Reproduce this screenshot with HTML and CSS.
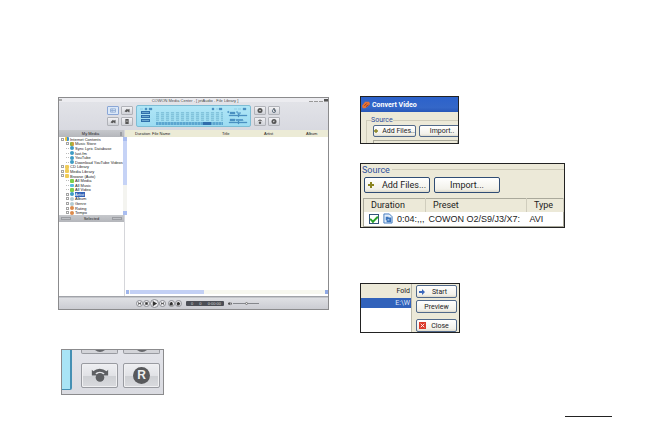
FILE: index.html
```html
<!DOCTYPE html>
<html lang="en">
<head>
  <meta charset="UTF-8" />
  <meta name="viewport" content="width=device-width, initial-scale=1.0" />
  <title>Convert Video</title>
  <link rel="stylesheet" href="styles.css">
</head>
<body>
  <main class="page">
    <div class="column left-column">
      <section class="player">
        <header class="player-title">
          <span class="title-mark"></span>
          <span class="title-text">COWON Media Center - [ jetAudio - File Library ]</span>
          <span class="window-icons"><i></i><i></i><i></i><i class="dark"></i></span>
        </header>

        <div class="player-top">
          <div class="pad pad-left">
            <button class="tool active" aria-label="Library"><svg viewBox="0 0 12 8"><path class="line" d="M3 2h6v4H3zM3 4h6M5 2v4" /></svg></button>
            <button class="tool" aria-label="Rip"><svg viewBox="0 0 12 8"><path d="M3 5l3-3 1 1 2-1v4H8L7 5 5 6z" /></svg></button>
            <button class="tool" aria-label="Burn"><svg viewBox="0 0 12 8"><path d="M3 5l3-3 1 1 2-1v4H8L7 5 5 6z" /></svg></button>
            <button class="tool" aria-label="Device"><svg viewBox="0 0 12 8"><path d="M4 1h4v6H4z" /><path class="light" d="M5 3h2v1H5z" /></svg></button>
          </div>
          <div class="lcd">
            <div class="lcd-tags">
              <svg viewBox="0 0 14 4"><path d="M1 2h3M6 1h2v2H6zM10 1h3v2h-3z" /></svg>
              <span></span><span></span><span></span>
            </div>
            <div class="lcd-main">
              <div class="lcd-status"><svg viewBox="0 0 12 4"><path d="M1 1h2v2H1zM5 2h2M8 1h3v2H8z" /></svg></div>
              <div class="meter"></div>
              <div class="lcd-strip"><i></i></div>
            </div>
            <div class="lcd-side">
              <svg viewBox="0 0 22 18"><path d="M8 2h3M12 2h3M17 1h3v2h-3zM1 5l2-1v2zM4 5h5v2H4zM3 8h18v1H3zM12 7h1v3h-1zM4 12h5v2H4zM3 15h18v1H3zM12 14h1v3h-1z" /><path class="wave" d="M10 5h2v2h2V5M10 12l1 2 1-2 1 2 1-2 1 2 1-2 1 2" /></svg>
            </div>
          </div>
          <div class="pad pad-right">
            <button class="tool" aria-label="Record"><svg viewBox="0 0 12 8"><circle cx="6" cy="4" r="3" /><circle class="light" cx="6" cy="4" r="1" /></svg></button>
            <button class="tool" aria-label="Timer"><svg viewBox="0 0 12 8"><circle class="line" cx="6" cy="4.500" r="2" /><path d="M5 1h2v1H5zM6 3h1v2H6z" /></svg></button>
            <button class="tool" aria-label="Convert"><svg viewBox="0 0 12 8"><circle cx="6" cy="5.500" r="1.500" /><path d="M3 4q3-5 6 0l-2-1H5z" /></svg></button>
            <button class="tool" aria-label="Recorder"><svg viewBox="0 0 12 8"><circle cx="6" cy="4" r="3" /><path class="light" d="M5 3h2v1H6v1H5z" /></svg></button>
          </div>
        </div>

        <div class="player-body">
          <aside class="library">
            <div class="library-head"><span>My Media</span><i class="head-mark"></i></div>
            <div class="tree-box">
              <ul class="tree">
                <li><b class="toggle"></b><b class="dot globe"></b>Internet Contents</li>
                <li class="child"><b class="toggle"></b><b class="dot store"></b>Music Store</li>
                <li class="child"><b class="stem"></b><b class="dot web"></b>Sync Lyric Database</li>
                <li class="child"><b class="stem"></b><b class="dot web"></b>last.fm</li>
                <li class="child"><b class="stem"></b><b class="dot web"></b>YouTube</li>
                <li class="child"><b class="stem"></b><b class="dot web"></b>Download YouTube Videos</li>
                <li><b class="toggle"></b><b class="dot folder"></b>CD Library</li>
                <li><b class="toggle"></b><b class="dot folder"></b>Media Library</li>
                <li><b class="toggle"></b><b class="dot folder"></b>Browse (Auto)</li>
                <li class="child"><b class="stem"></b><b class="dot green"></b>All Media</li>
                <li class="child"><b class="stem"></b><b class="dot note"></b>All Music</li>
                <li class="child"><b class="stem"></b><b class="dot green"></b>All Video</li>
                <li class="child"><b class="toggle"></b><b class="dot web"></b><span class="selected">Artist</span></li>
                <li class="child"><b class="toggle"></b><b class="dot disc"></b>Album</li>
                <li class="child"><b class="toggle"></b><b class="dot disc"></b>Genre</li>
                <li class="child"><b class="toggle"></b><b class="dot rate"></b>Rating</li>
                <li class="child"><b class="toggle"></b><b class="dot rate"></b>Tempo</li>
              </ul>
              <div class="v-scroll"><i></i></div>
            </div>
            <div class="selected-head"><i></i><span>Selected</span><i></i></div>
          </aside>
          <div class="files">
            <div class="file-head">
              <span></span><span>Duration</span><span>File Name</span><span>Title</span><span>Artist</span><span>Album</span>
            </div>
            <div class="h-scroll"><i class="thumb"></i><i class="end"></i></div>
          </div>
        </div>

        <div class="seek"></div>
        <footer class="controls">
          <div class="transport">
            <button class="round" aria-label="Previous"><svg viewBox="0 0 8 8"><path d="M2 2h1v4H2zM6 2v4L3 4z" /></svg></button>
            <button class="round" aria-label="Stop"><svg viewBox="0 0 8 8"><path d="M2 2h4v4H2z" /></svg></button>
            <button class="round play" aria-label="Play"><svg viewBox="0 0 8 8"><path d="M2 1l5 3-5 3z" /></svg></button>
            <button class="round" aria-label="Next"><svg viewBox="0 0 8 8"><path d="M5 2h1v4H5zM2 2v4l3-2z" /></svg></button>
            <button class="round extra" aria-label="Shuffle"><svg viewBox="0 0 8 8"><path d="M1 3l3-2 2 2v4H1z" /></svg></button>
            <button class="round" aria-label="Repeat"><svg viewBox="0 0 8 8"><path d="M1 3l3-2 3 3-2 3H2z" /></svg></button>
          </div>
          <div class="clock"><span>0</span><span>0</span><span>0:00:00</span></div>
          <svg class="speaker" viewBox="0 0 5 5"><path d="M0 1h1l2-1v4L1 3H0zM4 1h1v2H4z" /></svg>
          <input class="volume" type="range" aria-label="Volume" value="50">
        </footer>
      </section>

      <section class="closeup">
        <div class="closeup-lcd"></div>
        <div class="closeup-pad">
          <span class="pad-edge"><svg viewBox="0 0 12 3"><path d="M1 0h10q-5 4-10 0z" /></svg></span>
          <span class="pad-edge"><svg viewBox="0 0 12 3"><path d="M1 0h10q-5 4-10 0z" /></svg></span>
          <button class="big-tool" aria-label="Convert video">
            <svg viewBox="0 0 36 24"><path class="arc" d="M12 9q6-5 13 0" /><path d="M10 6v6h6zM27 6v6h-6z" /><circle cx="18.500" cy="14" r="4.500" /></svg>
          </button>
          <button class="big-tool"><span class="r-badge">R</span></button>
        </div>
      </section>
    </div>

    <div class="column right-column">
      <section class="shot convert">
        <div class="convert-title">
          <svg viewBox="0 0 10 10"><path class="orange" d="M0 6l4-5h5l1 3-3 3-3 2H1z" /><path class="hole" d="M3 6l3-3M5 7l3-2" /></svg>
          <span>Convert Video</span>
        </div>
        <div class="convert-body">
          <fieldset class="source-box">
            <legend>Source</legend>
            <div class="small-row">
              <button class="xp-button"><svg class="plus" viewBox="0 0 6 6"><path d="M2 0h2v2h2v2H4v2H2V4H0V2h2z" /></svg>Add Files..</button>
              <button class="xp-button">Import..</button>
            </div>
            <div class="list-edge"></div>
          </fieldset>
        </div>
      </section>

      <section class="shot source">
        <div class="source-title"><span>Source</span></div>
        <div class="source-buttons">
          <button class="xp-button large"><svg class="plus" viewBox="0 0 6 6"><path d="M2 0h2v2h2v2H4v2H2V4H0V2h2z" /></svg>Add Files...</button>
          <button class="xp-button large">Import...</button>
        </div>
        <table class="source-table">
          <thead>
            <tr><th class="col-duration">Duration</th><th class="col-preset">Preset</th><th>Type</th></tr>
          </thead>
          <tbody>
            <tr>
              <td>
                <div class="duration">
                  <input type="checkbox" checked aria-label="Convert this file">
                  <svg class="file-icon" viewBox="0 0 11 12"><path class="sheet" d="M1 1h6l3 3v7H1z" /><path class="mark" d="M3 4h3v1h3v5H4V8H3z" /><path class="mark-hole" d="M5 7h2v1H5z" /></svg>
                  <span>0:04:,,,</span>
                </div>
              </td>
              <td>COWON O2/S9/J3/X7:</td>
              <td>AVI</td>
            </tr>
          </tbody>
        </table>
      </section>

      <section class="shot start">
        <div class="fold-list">
          <div class="fold-head">Fold</div>
          <div class="fold-row">E:\W</div>
        </div>
        <div class="start-buttons">
          <button class="xp-button"><svg class="arrow" viewBox="0 0 6 6"><path d="M0 2h3V0l3 3-3 3V4H0z" /></svg><span>Start</span></button>
          <button class="xp-button"><span>Preview</span></button>
          <button class="xp-button close"><svg class="cross" viewBox="0 0 8 8"><path d="M0 0h8v8H0z" /><path class="x" d="M2 2l4 4M6 2L2 6" /></svg><span>Close</span></button>
        </div>
      </section>

      <hr class="page-rule">
    </div>
  </main>
</body>
</html>
```

FILE: styles.css
```css
:root {
  --frame: #8b8b8d;
  --panel: #dcdde3;
  --xp-bg: #ece9d8;
  --xp-blue: #3162bb;
  --tiny: 4px;
}

* {
  box-sizing: border-box;
}

body {
  margin: 0;
  background: #fff;
  color: #222;
  font-family: "Liberation Sans", Arial, sans-serif;
}

button {
  margin: 0;
  padding: 0;
  font: inherit;
  color: inherit;
}

svg {
  display: block;
}

i,
b {
  flex: none;
  font-style: normal;
  font-weight: normal;
}

.page {
  display: grid;
  grid-template-columns: 271fr 275fr;
  gap: 31px;
  padding: 96px 30px 0 58px;
}

.column {
  display: flex;
  flex-direction: column;
  align-items: flex-start;
}

/* player window */
.player {
  width: 100%;
  margin-top: 1px;
  border: 1px solid var(--frame);
  background: var(--panel);
  font-size: var(--tiny);
  line-height: 5px;
}

.player-title {
  display: flex;
  align-items: center;
  justify-content: space-between;
  height: 4px;
  background: #ececf0;
}

.title-mark {
  width: 22px;
  height: 2px;
  border-left: 3px solid #aaa;
}

.title-text {
  color: #444;
}

.window-icons {
  display: flex;
  gap: 1px;
}

.window-icons i {
  width: 4px;
  height: 3px;
  border-bottom: 1px solid #999;
}

.window-icons .dark {
  background: #555;
}

.player-top {
  display: flex;
  justify-content: center;
  gap: 3px;
  height: 28px;
  padding: 3px 1px 3px 0;
  background: linear-gradient(#e2e3e8, #d8d9e0);
}

.pad {
  display: grid;
  grid-template-columns: 12px 12px;
  gap: 2px;
  padding: 1px 0;
}

.tool {
  border: 1px solid #b0b2b8;
  border-radius: 1px;
  background: linear-gradient(#f2f2f5, #d0d2d8);
}

.tool.active {
  border-color: #8aa6d6;
  background: #dbe8f8;
}

.tool svg {
  width: 100%;
  height: 100%;
  fill: #555;
}

.tool .light {
  fill: #ddd;
}

.line {
  fill: none;
  stroke: #567;
}

.tool.active .line {
  stroke: #8fabd2;
}

.lcd {
  display: grid;
  grid-template-columns: 14px 1fr 22px;
  gap: 3px;
  width: 115px;
  padding: 1px 2px;
  border: 1px solid #7dbdd5;
  border-radius: 2px;
  background: linear-gradient(#b0e6f6, #9cdcf2);
}

.lcd svg {
  width: 100%;
  fill: #4a90c2;
}

.lcd svg path {
  stroke: #4a90c2;
  stroke-width: 0.3;
}

.lcd svg .wave {
  fill: none;
  stroke-width: 1;
}

.lcd-tags {
  display: grid;
  grid-template-rows: 4px repeat(3, 4px);
}

.lcd-tags span {
  margin: 0 3px 1px 2px;
  border: 1px solid #2f70ac;
  background: #6aa8d0;
}

.lcd-main {
  display: grid;
  grid-template-rows: 5px 9px 4px;
}

.lcd-status svg {
  width: 12px;
  height: 4px;
  margin-left: auto;
}

.meter {
  background:
    repeating-linear-gradient(90deg, transparent 0 3px, #a4dff2 3px 5px),
    repeating-linear-gradient(#82c3dc 0 1px, #94d2e7 1px 2px);
}

.lcd-strip {
  display: flex;
  justify-content: flex-end;
  margin-top: 1px;
  padding-right: 12px;
  background: repeating-linear-gradient(90deg, #5ca6d0 0 2px, #76b9da 2px 3px);
}

.lcd-strip i {
  width: 8px;
  background: #2f6cab;
}

.player-body {
  display: grid;
  grid-template-columns: 66px 1fr;
  height: 166px;
  background: #fff;
}

.library {
  display: flex;
  flex-direction: column;
  border-right: 1px solid #d5d6da;
}

.library-head,
.selected-head {
  display: flex;
  align-items: center;
  height: 7px;
  padding: 1px 2px;
  background: linear-gradient(#c6c8cc, #b4b6bb);
}

.library-head span,
.selected-head span {
  flex: 1;
  text-align: center;
}

.selected-head i {
  width: 10px;
  height: 3px;
  border: 1px solid #9b9da2;
}

.head-mark {
  width: 2px;
  height: 4px;
  background: #999ba0;
}

.tree-box {
  display: flex;
  height: 78px;
}

.tree {
  display: grid;
  grid-template-rows: repeat(17, 1fr);
  flex: 1;
  margin: 0;
  padding: 0 0 0 2px;
  list-style: none;
  white-space: nowrap;
}

.tree li {
  display: flex;
  align-items: center;
  min-height: 0;
}

.tree .child {
  padding-left: 5px;
}

.toggle {
  width: 3px;
  height: 3px;
  border: 1px solid #a4a4a4;
}

.stem {
  width: 3px;
  border-top: 1px dotted #bbb;
}

.dot {
  width: 4px;
  height: 4px;
  margin: 0 1px;
  border-radius: 1px;
}

.dot.globe { background: linear-gradient(90deg, #e8c33c 50%, #3d8fd0 50%); }
.dot.store { background: linear-gradient(90deg, #78b843, #e99a3b); }
.dot.web { background: #3f9bc4; border-radius: 2px; }
.dot.folder { background: #efcb58; }
.dot.green { background: #7ccf4e; }
.dot.note { background: #55bde0; height: 3px; }
.dot.disc { background: #b4cbd2; border-radius: 2px; }
.dot.rate { background: #dc8a4b; border-radius: 2px; }

.tree .selected {
  padding-right: 1px;
  background: #3163b8;
  color: #fff;
}

.v-scroll {
  display: flex;
  flex: none;
  width: 4px;
  padding-bottom: 26px;
  border-top: 4px solid #a9bdf0;
  border-bottom: 4px solid #a9bdf0;
  background: #f4f4f0;
}

.v-scroll i {
  width: 4px;
  background: #c6d3f6;
}

.files {
  display: flex;
  flex-direction: column;
  justify-content: space-between;
  padding-bottom: 2px;
}

.file-head {
  display: grid;
  grid-template-columns: 10px 17px 70px 42px 42px 1fr;
  height: 7px;
  padding-top: 1px;
  background: #ecebd6;
  white-space: nowrap;
}

.h-scroll {
  display: flex;
  justify-content: space-between;
  height: 4px;
  margin-left: 1px;
  border-left: 3px solid #9fb5ea;
  background: #f7f7ef;
}

.h-scroll .thumb {
  width: 37%;
  margin-left: 1px;
  background: #c3d0f5;
}

.h-scroll .end {
  width: 3px;
  background: #8fa8e4;
}

.seek {
  height: 2px;
  border-top: 1px solid #a1a3a9;
  background: #c3c5ca;
}

.controls {
  display: flex;
  align-items: center;
  height: 11px;
  padding-left: 77px;
  background: linear-gradient(#dfe0e4, #cbccd2);
}

.transport {
  display: flex;
  align-items: center;
}

.round {
  width: 7px;
  height: 7px;
  border: 1px solid #8b8d93;
  border-radius: 50%;
  background: #eeeef1;
}

.round.play {
  width: 9px;
  height: 9px;
}

.round.extra {
  margin-left: 2px;
}

.round svg {
  width: 100%;
  height: 100%;
  fill: #333;
}

.clock {
  display: flex;
  justify-content: space-between;
  width: 38px;
  margin: 0 4px;
  padding: 0 3px 0 5px;
  border-radius: 1px;
  background: #4b4e55;
  color: #d8d8d8;
}

.speaker {
  width: 4px;
  height: 4px;
  fill: #555;
}

.volume {
  width: 26px;
  height: 4px;
  margin: 0 0 0 1px;
  appearance: none;
  background: linear-gradient(transparent 1px, #85878c 1px 2px, transparent 2px);
}

.volume::-webkit-slider-thumb {
  width: 3px;
  height: 3px;
  appearance: none;
  border: 1px solid #777;
  border-radius: 50%;
  background: #eee;
}

/* enlarged corner of the player */
.closeup {
  display: flex;
  gap: 9px;
  width: 103px;
  height: 46px;
  margin: 39px 0 0 3px;
  overflow: hidden;
  border: 1px solid #8b8b8d;
  background: linear-gradient(#e3e4ea, #dadbe1);
}

.closeup-lcd {
  width: 10px;
  height: 40px;
  border: 1px solid #4590b4;
  border-width: 0 2px 1px 0;
  border-radius: 0 0 2px 0;
  background: #a9e4f5;
}

.closeup-pad {
  display: grid;
  grid-template-columns: 37px 37px;
  grid-template-rows: 4px 25px;
  gap: 9px 5px;
}

.pad-edge {
  border: 1px solid #999ba1;
  border-top: 0;
  border-radius: 0 0 2px 2px;
  background: #d3d4d9;
}

.pad-edge svg {
  width: 12px;
  height: 3px;
  margin: 0 auto;
  fill: #66686c;
}

.big-tool {
  border: 1px solid #999ba1;
  border-radius: 2px;
  background: linear-gradient(#eeeff2, #e1e2e6 50%, #cdcfd3 50%, #d9dade);
  box-shadow: inset 0 0 0 1px #f0f0f2;
}

.big-tool svg {
  width: 100%;
  height: 100%;
  fill: #5d5f62;
}

.big-tool .arc {
  fill: none;
  stroke: #5d5f62;
  stroke-width: 3;
}

.r-badge {
  display: block;
  width: 17px;
  height: 17px;
  margin: 0 auto;
  border-radius: 50%;
  background: #58595c;
  color: #eee;
  font: bold 12px/17px "Liberation Sans", sans-serif;
}

/* Windows XP style dialogs */
.shot {
  overflow: hidden;
  border: 1px solid #222;
  background: var(--xp-bg);
  font-family: Roboto, "Liberation Sans", sans-serif;
  font-size: 7px;
  line-height: 10px;
}

.xp-button {
  display: flex;
  align-items: center;
  justify-content: center;
  border: 1px solid #51698a;
  border-radius: 2px;
  background: linear-gradient(#fff, #f2f1ea 80%, #dedacb);
  color: #222;
  white-space: nowrap;
}

.plus {
  flex: none;
  fill: #8a8420;
}

.convert {
  width: 99px;
  height: 48px;
}

.convert-title {
  display: flex;
  align-items: center;
  gap: 2px;
  height: 15px;
  padding-left: 1px;
  background: linear-gradient(#2c62cb, #3467c8 70%, #2857b8);
  color: #fff;
  font-weight: bold;
}

.convert-title svg {
  width: 8px;
  height: 8px;
}

.orange {
  fill: #e67333;
}

.hole {
  fill: none;
  stroke: #8c2e1c;
}

.convert-body {
  padding: 3px 0 0 5px;
}

.source-box {
  min-width: 0;
  margin: 0;
  padding: 0 0 0 6px;
  border: 1px solid #cfccba;
  border-right: 0;
}

.source-box legend {
  margin-left: -2px;
  padding: 0;
  color: #2f4f9c;
}

.small-row {
  display: grid;
  grid-template-columns: 43px 46px;
  gap: 3px;
}

.small-row .xp-button {
  height: 12px;
}

.small-row .plus {
  width: 4px;
  height: 4px;
  margin-right: 4px;
}

.list-edge {
  height: 8px;
  margin-top: 3px;
  border: 1px solid #aaa99b;
}

.source {
  width: 205px;
  height: 65px;
  margin-top: 19px;
  font-size: 9px;
}

.source-title {
  display: flex;
  align-items: center;
  gap: 2px;
  height: 11px;
  padding-left: 1px;
  color: #2f4f9c;
}

.source-title::after {
  flex: 1;
  border-top: 1px solid #cfccba;
  content: "";
}

.source-buttons {
  display: grid;
  grid-template-columns: 66px 66px;
  gap: 4px;
  padding: 2px 3px 5px;
}

.xp-button.large {
  height: 16px;
  border-color: #2f4c74;
}

.large .plus {
  width: 6px;
  height: 6px;
  margin-right: 8px;
}

.source-table {
  width: 201px;
  margin-left: 2px;
  border-collapse: collapse;
  border: 1px solid #aaa99b;
  table-layout: fixed;
  white-space: nowrap;
}

.source-table th {
  height: 13px;
  padding: 0 0 0 7px;
  border-right: 1px solid #d0cdbd;
  font-weight: normal;
  text-align: left;
}

.source-table td {
  height: 15px;
  padding: 0;
  background: #fff;
  font-family: "Liberation Sans", sans-serif;
}

.source-table td + td {
  padding-left: 3px;
}

.col-duration {
  width: 62px;
}

.col-preset {
  width: 101px;
}

.duration {
  display: flex;
  align-items: center;
  gap: 4px;
  padding-left: 5px;
}

.duration input {
  display: grid;
  flex: none;
  place-items: center;
  width: 10px;
  height: 10px;
  margin: 0;
  appearance: none;
  border: 1px solid #33557b;
  background: #fff;
}

.duration input:checked::before {
  width: 6px;
  height: 3px;
  border: solid #28a028;
  border-width: 0 0 2px 2px;
  content: "";
  transform: rotate(-45deg);
}

.file-icon {
  flex: none;
  width: 10px;
  height: 11px;
}

.sheet {
  fill: #e3eefb;
  stroke: #3974bc;
}

.mark {
  fill: #3974bc;
}

.mark-hole {
  fill: #e3eefb;
}

.start {
  display: grid;
  grid-template-columns: 51px 1fr;
  width: 100px;
  height: 50px;
  margin-top: 55px;
}

.fold-list {
  border-right: 1px solid #bbb9aa;
  background: #fff;
}

.fold-head,
.fold-row {
  padding-right: 1px;
  text-align: right;
}

.fold-head {
  height: 14px;
  padding-top: 2px;
  background: var(--xp-bg);
}

.fold-row {
  background: var(--xp-blue);
  color: #dfe7fa;
}

.start-buttons {
  display: flex;
  flex-direction: column;
  gap: 2px;
  padding: 1px 2px 0 4px;
}

.start-buttons .xp-button {
  height: 13px;
  padding: 0 2px;
}

.start-buttons span {
  flex: 1;
  text-align: center;
}

.start-buttons .close {
  margin-top: 4px;
}

.arrow {
  width: 6px;
  height: 6px;
  fill: #3a67bd;
}

.cross {
  width: 7px;
  height: 7px;
  fill: #dc3b2c;
}

.cross .x {
  stroke: #fff;
}

.page-rule {
  width: 47px;
  height: 1px;
  margin: 83px 0 0 205px;
  border: 0;
  background: #222;
}
```
